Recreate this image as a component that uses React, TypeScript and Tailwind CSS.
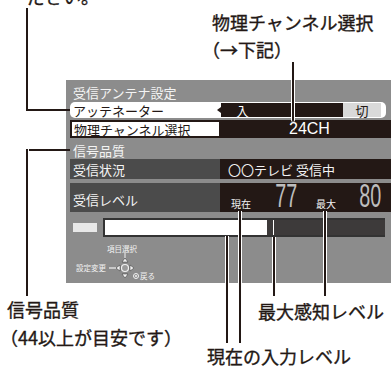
import React from 'react';

const DPad = () => (
  <svg width="26" height="28" viewBox="0 0 26 28" className="block">
    <line x1="16" y1="0" x2="16" y2="5" stroke="#f2f2f2" strokeWidth="1" />
    <polygon points="13,9 19,9 16,5" fill="#f2f2f2" stroke="#333" strokeWidth="0.5" />
    <line x1="0" y1="15" x2="7" y2="15" stroke="#f2f2f2" strokeWidth="1.2" />
    <polygon points="11,12 11,18 7,15" fill="#f2f2f2" stroke="#333" strokeWidth="0.5" />
    <polygon points="21,12 21,18 25,15" fill="#f2f2f2" stroke="#333" strokeWidth="0.5" />
    <polygon points="13,21 19,21 16,25" fill="#f2f2f2" stroke="#333" strokeWidth="0.5" />
    <circle cx="16" cy="15" r="3.5" fill="#9a9a9a" stroke="#f2f2f2" strokeWidth="1.2" />
  </svg>
);

const App = () => {
  return (
    <div className="relative h-[367px] w-[391px] overflow-hidden bg-white pl-[66px] pt-[80px] font-['Noto_Sans_CJK_JP',sans-serif] text-[#231815]">
      {/* 画面 */}
      <div className="h-[203px] w-[325px] bg-[#8c8c8c] pl-[4px] text-[13px] leading-none">
        <div className="flex h-[22px] items-center pl-[3px] pt-[2px] text-[#f4f4f4]">受信アンテナ設定</div>

        <div className="flex h-[16px] w-[316px] items-center rounded-[5px] bg-white py-[1px]">
          <div className="w-[147px] pl-[3px] text-[#231815]">アッテネーター</div>
          <div className="h-0 w-0 border-y-[3px] border-r-[4px] border-y-transparent border-r-[#231815]" />
          <div className="h-full w-[122px] bg-[#231815] pl-[15px] pt-[1px] text-white">入</div>
          <div className="flex h-full w-[38px] items-center justify-center bg-[#d9d9d9] text-[#231815]">切</div>
        </div>

        <div className="mt-[2px] flex h-[18px]">
          <div className="flex w-[151px] items-center border-2 border-[#231815] bg-white pl-[2px]">物理チャンネル選択</div>
          <div className="flex flex-1 items-center bg-[#231815] pl-[68px] font-['Liberation_Sans',sans-serif] text-[16px] text-white">24CH</div>
        </div>

        <div className="flex h-[21px] items-center pl-[3px] pt-[4px] text-[#f4f4f4]">信号品質</div>

        <div className="flex h-[20px] text-[#f4f4f4]">
          <div className="flex w-[150px] items-center bg-[#4b4b4b] pl-[3px]">受信状況</div>
          <div className="flex flex-1 items-center bg-[#231815] pl-[8px]">〇〇テレビ 受信中</div>
        </div>

        <div className="mt-[4px] flex h-[29px] text-[#f4f4f4]">
          <div className="flex w-[150px] items-center bg-[#4b4b4b] pl-[3px] pt-[4px]">受信レベル</div>
          <div className="flex flex-1 items-end bg-[#231815] pb-[3px] pl-[11px]">
            <span className="text-[10px]">現在</span>
            <span className="ml-[17px] inline-block w-[37px] text-center font-['Liberation_Sans',sans-serif] text-[33px] leading-[26px] text-[#bdbdbd]">
              <span className="inline-block scale-x-[0.6]">77</span>
            </span>
            <span className="ml-[11px] text-[10px]">最大</span>
            <span className="ml-[16px] inline-block w-[37px] text-center font-['Liberation_Sans',sans-serif] text-[33px] leading-[26px] text-[#bdbdbd]">
              <span className="inline-block scale-x-[0.6]">80</span>
            </span>
          </div>
        </div>

        <div className="mt-[6px] flex h-[19px] items-center">
          <div className="ml-[3px] h-[9px] w-[24px] bg-[#e8e8e8]" />
          <div className="ml-[6px] flex h-[19px] w-[282px] border-2 border-r-0 border-[#333]">
            <div className="w-[162px] bg-white" />
            <div className="relative flex-1 bg-[#3d3a3a]">
              <div className="absolute left-[6px] top-0 h-full w-[1px] bg-white" />
            </div>
          </div>
        </div>

        <div className="flex h-[46px] items-start pl-[6px] text-[7.5px] text-[#f2f2f2]">
          <span className="mt-[27px] w-[31px]">設定変更</span>
          <div className="mt-[8px] flex w-[30px] flex-col items-center">
            <span>項目選択</span>
            <DPad />
          </div>
          <span className="-ml-[4px] mt-[35px] flex items-center">
            <span className="mr-[1px] flex h-[6px] w-[6px] items-center justify-center rounded-full border border-[#f2f2f2]">
              <span className="h-[2px] w-[2px] rounded-full bg-[#f2f2f2]" />
            </span>
            戻る
          </span>
        </div>
      </div>

      {/* 注記 */}
      <div className="absolute left-[27px] top-[-15px] text-[18px] leading-[22px] [-webkit-text-stroke:0.35px_#231815]">ださい。</div>
      <div className="absolute left-[212px] top-[11px] text-[18px] leading-[22px] [-webkit-text-stroke:0.35px_#231815]">物理チャンネル選択</div>
      <div className="absolute left-[202px] top-[38px] text-[18px] leading-[22px] [-webkit-text-stroke:0.35px_#231815]">（→下記）</div>
      <div className="absolute left-[7px] top-[298px] text-[18px] leading-[22px] [-webkit-text-stroke:0.35px_#231815]">信号品質</div>
      <div className="absolute left-0 top-[326px] text-[18px] leading-[22px] [-webkit-text-stroke:0.35px_#231815]">（44以上が目安です）</div>
      <div className="absolute left-[258px] top-[300px] text-[18px] leading-[22px] [-webkit-text-stroke:0.35px_#231815]">最大感知レベル</div>
      <div className="absolute left-[207px] top-[346px] text-[18px] leading-[20px] [-webkit-text-stroke:0.35px_#231815]">現在の入力レベル</div>

      {/* 引き出し線 */}
      <div className="absolute left-[25px] top-[8px] h-[103px] w-[4px] border-x border-white bg-[#231815]" />
      <div className="absolute left-[26px] top-[109px] h-[2px] w-[44px] bg-[#231815]" />

      <div className="absolute left-[291px] top-[62px] h-[60px] w-[4px] rounded-b-full border-x border-white bg-[#231815]" />

      <div className="absolute left-[26px] top-[149px] h-[2px] w-[44px] bg-[#231815]" />
      <div className="absolute left-[25px] top-[149px] h-[147px] w-[4px] border-x border-white bg-[#231815]" />

      <div className="absolute left-[225px] top-[236px] h-[107px] w-[4px] border-x border-white bg-[#231815]" />
      <div className="absolute left-[238px] top-[211px] h-[132px] w-[4px] border-x border-white bg-[#231815]" />
      <div className="absolute left-[272px] top-[237px] h-[59px] w-[4px] border-x border-white bg-[#231815]" />
      <div className="absolute left-[323px] top-[211px] h-[85px] w-[4px] border-x border-white bg-[#231815]" />
    </div>
  );
};

export default App;
